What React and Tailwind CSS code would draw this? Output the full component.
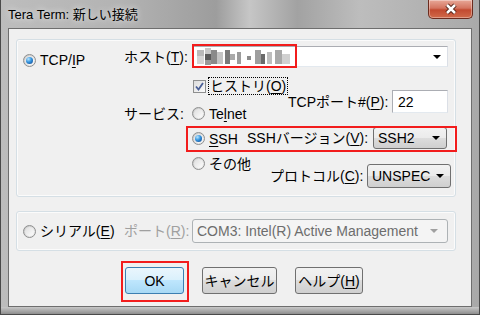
import React from "react";

function Radio({ checked }) {
  return (
    <span className="flex h-[13px] w-[13px] shrink-0 items-center justify-center rounded-full border border-[#8e8f8f] bg-[linear-gradient(135deg,#c4c4c4,#f4f4f4)]">
      <span className="flex h-[9px] w-[9px] items-center justify-center rounded-full bg-[linear-gradient(135deg,#dedede,#fdfdfd)]">
        {checked && (
          <span className="h-[7px] w-[7px] rounded-full bg-[radial-gradient(circle_at_35%_30%,#b8e6ff_0%,#3494de_45%,#0b3c84_100%)]" />
        )}
      </span>
    </span>
  );
}

function Arrow({ gray }) {
  return (
    <span
      className={
        "h-0 w-0 shrink-0 border-x-[4px] border-t-[4px] border-x-transparent " +
        (gray ? "border-t-[#a0a0a0]" : "border-t-black")
      }
    />
  );
}

function Select({ value, w, h }) {
  return (
    <div
      className={
        "flex items-center justify-between rounded-[3px] border border-[#707070] bg-[linear-gradient(180deg,#f2f2f2_0%,#ebebeb_50%,#dddddd_50%,#cfcfcf_100%)] pl-[4px] pr-[6px] " +
        w +
        " " +
        h
      }
    >
      <span>{value}</span>
      <Arrow />
    </div>
  );
}

function Btn({ children, w, active }) {
  return (
    <div
      className={
        "flex h-[27px] items-center justify-center rounded-[3px] border " +
        w +
        (active
          ? " border-[#3c7fb1] bg-[linear-gradient(180deg,#eaf6fd_0%,#d9f0fc_50%,#bee6fd_50%,#a7d9f5_100%)]"
          : " border-[#707070] bg-[linear-gradient(180deg,#f2f2f2_0%,#ebebeb_50%,#dddddd_50%,#cfcfcf_100%)]")
      }
    >
      {children}
    </div>
  );
}

const mosaic = [
  [0, 2, 7, 6, "#b9b9b9"],
  [0, 8, 7, 8, "#d4d4d4"],
  [8, 0, 6, 6, "#c8c8c8"],
  [8, 6, 6, 6, "#5a5a5a"],
  [8, 12, 6, 5, "#9a9a9a"],
  [14, 2, 6, 14, "#8a8a8a"],
  [20, 4, 6, 12, "#c4c4c4"],
  [28, 2, 5, 14, "#7a7a7a"],
  [33, 6, 5, 6, "#aaaaaa"],
  [40, 4, 4, 12, "#9c9c9c"],
  [50, 8, 4, 4, "#8c8c8c"],
  [58, 2, 6, 14, "#9e9e9e"],
  [64, 6, 4, 10, "#6a6a6a"],
  [70, 4, 5, 12, "#bdbdbd"],
  [78, 2, 7, 14, "#a8a8a8"],
  [85, 6, 8, 10, "#d0d0d0"],
];

export default function App() {
  return (
    <div className="flex h-[315px] w-[480px] flex-col overflow-hidden border-x border-b border-[#4a4a4a] bg-[linear-gradient(90deg,#bdbdbd_0%,#b3b3b3_25%,#9d9d9d_45%,#c6c6c6_52%,#a2a2a2_62%,#bdbdbd_75%,#a9a9a9_100%)] font-['Liberation_Sans','Noto_Sans_CJK_JP',sans-serif] text-[14px] leading-[16px] text-black">
      {/* title bar */}
      <div className="flex h-[28px] shrink-0 items-start justify-between">
        <div className="pl-[7px] pt-[7px] text-[13px] leading-[16px] [text-shadow:0_0_6px_rgba(255,255,255,0.9)]">
          Tera Term: 新しい接続
        </div>
        <div className="mr-[6px] flex h-[19px] w-[45px] items-center justify-center rounded-b-[5px] border border-t-0 border-[#6b2b1e] bg-[linear-gradient(180deg,#e8a898_0%,#d47460_45%,#c24a30_55%,#d06a4a_100%)] shadow-[inset_0_0_0_1px_rgba(255,255,255,0.35)]">
          <svg width="14" height="12" viewBox="0 0 14 12">
            <path d="M3 2 L11 10 M11 2 L3 10" stroke="#4a1a10" strokeWidth="4.5" />
            <path d="M3 2 L11 10 M11 2 L3 10" stroke="#fff" strokeWidth="2.5" />
          </svg>
        </div>
      </div>

      {/* client */}
      <div className="mx-[7px] flex h-[279px] shrink-0 flex-col border border-[#6e6e6e] bg-[#f0f0f0] px-[7px] pt-[10px]">
        {/* TCP/IP group */}
        <div className="flex h-[158px] w-[440px] rounded-[3px] border border-[#d5dfe5] shadow-[inset_0_0_0_1px_#fbfbfb]">
          <div className="w-[107px] shrink-0 pl-[6px] pt-[12px]">
            <div className="flex h-[16px] items-center gap-[4px]">
              <Radio checked />
              <span>
                TCP/<u className="underline-offset-2">I</u>P
              </span>
            </div>
          </div>
          <div className="flex flex-1 flex-col">
            <div className="mt-[6px] flex h-[21px] items-center">
              <span className="w-[69px] shrink-0 whitespace-nowrap">
                ホスト(<u className="underline-offset-2">T</u>):
              </span>
              <div className="relative flex h-[21px] w-[255px] items-center justify-between border border-[#abadb3] border-b-[#e3e9ef] border-r-[#dbdfe6] bg-white pl-[3px] pr-[6px]">
                <svg width="94" height="17" viewBox="0 0 94 17">
                  {mosaic.map(([x, y, w, h, f], i) => (
                    <rect key={i} x={x} y={y} width={w} height={h} fill={f} />
                  ))}
                </svg>
                <Arrow />
                <div className="pointer-events-none absolute -left-[2px] -top-[3px] h-[24px] w-[105px] border-2 border-[#f21c1c]" />
              </div>
            </div>

            <div className="mt-[11px] flex h-[16px] items-center gap-[2px] pl-[69px]">
              <span className="flex h-[13px] w-[13px] items-center justify-center border border-[#8e8f8f] bg-[linear-gradient(135deg,#dcdcdc,#fbfbfb)]">
                <svg width="9" height="9" viewBox="0 0 9 9">
                  <path d="M1 4.5 L3.5 7.5 L8 1" fill="none" stroke="#4a5f97" strokeWidth="1.8" />
                </svg>
              </span>
              <span className="whitespace-nowrap border border-dotted border-black px-[1px]">
                ヒストリ(<u className="underline-offset-2">O</u>)
              </span>
            </div>

            <div className="relative mt-[7px] flex">
              <div className="flex h-[25px] w-[66px] shrink-0 items-center whitespace-nowrap">サービス:</div>
              <div className="flex w-[57px] shrink-0 flex-col">
                <div className="flex h-[25px] items-center gap-[4px] whitespace-nowrap pl-[2px]">
                  <Radio />
                  <span>
                    Te<u className="underline-offset-2">l</u>net
                  </span>
                </div>
                <div className="flex h-[25px] items-center gap-[4px] whitespace-nowrap pl-[2px]">
                  <Radio checked />
                  <span>
                    <u className="underline-offset-2">S</u>SH
                  </span>
                </div>
                <div className="flex h-[25px] items-center gap-[4px] whitespace-nowrap pl-[2px]">
                  <Radio />
                  <span>その他</span>
                </div>
              </div>
              <div className="flex flex-1 flex-col">
                <div className="-mt-[11px] ml-[41px] flex h-[23px] items-center">
                  <span className="w-[104px] shrink-0 whitespace-nowrap">
                    TCPポート#(<u className="underline-offset-2">P</u>):
                  </span>
                  <div className="flex h-[23px] w-[56px] items-center border border-[#abadb3] border-b-[#e3e9ef] border-r-[#dbdfe6] bg-white pl-[5px]">
                    22
                  </div>
                </div>
                <div className="mt-[14px] flex h-[22px] items-center">
                  <span className="w-[126px] shrink-0 whitespace-nowrap">
                    SSHバージョン(<u className="underline-offset-2">V</u>):
                  </span>
                  <Select value="SSH2" w="w-[74px]" h="h-[22px]" />
                </div>
                <div className="mt-[15px] ml-[23px] flex h-[24px] items-center">
                  <span className="w-[97px] shrink-0 whitespace-nowrap">
                    プロトコル(<u className="underline-offset-2">C</u>):
                  </span>
                  <Select value="UNSPEC" w="w-[84px]" h="h-[24px]" />
                </div>
              </div>
              <div className="pointer-events-none absolute left-[62px] top-[25px] h-[26px] w-[271px] border-2 border-[#f21c1c]" />
            </div>
          </div>
        </div>

        {/* serial group */}
        <div className="mt-[14px] flex h-[40px] w-[440px] items-center rounded-[3px] border border-[#d5dfe5] shadow-[inset_0_0_0_1px_#fbfbfb]">
          <div className="flex w-[107px] shrink-0 items-center gap-[4px] pl-[6px]">
            <Radio />
            <span className="whitespace-nowrap">
              シリアル(<u className="underline-offset-2">E</u>)
            </span>
          </div>
          <span className="w-[68px] shrink-0 whitespace-nowrap text-[#a0a0a0]">
            ポート(<u className="underline-offset-2">R</u>):
          </span>
          <div className="flex h-[24px] w-[256px] items-center justify-between rounded-[3px] border border-[#adb2b5] bg-[#f4f4f4] pl-[4px] pr-[9px] text-[#6d6d6d]">
            <span className="whitespace-nowrap">COM3: Intel(R) Active Management</span>
            <Arrow gray />
          </div>
        </div>

        {/* buttons */}
        <div className="mt-[16px] flex gap-[18px] pl-[109px]">
          <div className="relative">
            <Btn w="w-[59px]" active>
              OK
            </Btn>
            <div className="pointer-events-none absolute -left-[4px] -top-[6px] h-[41px] w-[68px] border-2 border-[#f21c1c]" />
          </div>
          <Btn w="w-[75px]">キャンセル</Btn>
          <Btn w="w-[68px]">
            ヘルプ(<u className="underline-offset-2">H</u>)
          </Btn>
        </div>
      </div>

      <div className="flex-1 bg-[linear-gradient(180deg,#c8c8c8,#8e8e8e)]" />
    </div>
  );
}
